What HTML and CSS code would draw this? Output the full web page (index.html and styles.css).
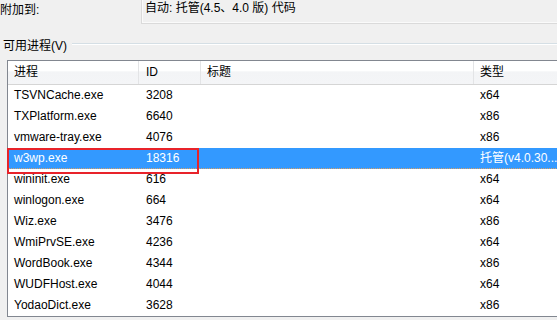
FILE: index.html
```html
<!DOCTYPE html>
<html lang="zh-CN">
<head>
    <meta charset="UTF-8">
    <title>附加到进程</title>
    <link rel="stylesheet" href="styles.css">
</head>
<body>
    <div class="dialog">
        <!-- 附加到 -->
        <div class="attach-row">
            <span class="attach-label">附加到:</span>
            <div class="attach-box">自动: 托管(4.5、4.0 版) 代码</div>
        </div>

        <!-- 可用进程 -->
        <div class="group-title">
            <span>可用进程(V)</span>
            <span class="group-line"></span>
        </div>

        <div class="list">
            <div class="row head">
                <div class="cell">进程</div>
                <div class="cell">ID</div>
                <div class="cell">标题</div>
                <div class="cell">类型</div>
            </div>
            <div class="row"><div class="cell">TSVNCache.exe</div><div class="cell">3208</div><div class="cell"></div><div class="cell">x64</div></div>
            <div class="row"><div class="cell">TXPlatform.exe</div><div class="cell">6640</div><div class="cell"></div><div class="cell">x86</div></div>
            <div class="row"><div class="cell">vmware-tray.exe</div><div class="cell">4076</div><div class="cell"></div><div class="cell">x86</div></div>
            <div class="row selected"><div class="cell">w3wp.exe</div><div class="cell">18316</div><div class="cell"></div><div class="cell">托管(v4.0.30...</div></div>
            <div class="row"><div class="cell">wininit.exe</div><div class="cell">616</div><div class="cell"></div><div class="cell">x64</div></div>
            <div class="row"><div class="cell">winlogon.exe</div><div class="cell">664</div><div class="cell"></div><div class="cell">x64</div></div>
            <div class="row"><div class="cell">Wiz.exe</div><div class="cell">3476</div><div class="cell"></div><div class="cell">x86</div></div>
            <div class="row"><div class="cell">WmiPrvSE.exe</div><div class="cell">4236</div><div class="cell"></div><div class="cell">x64</div></div>
            <div class="row"><div class="cell">WordBook.exe</div><div class="cell">4344</div><div class="cell"></div><div class="cell">x86</div></div>
            <div class="row"><div class="cell">WUDFHost.exe</div><div class="cell">4044</div><div class="cell"></div><div class="cell">x64</div></div>
            <div class="row"><div class="cell">YodaoDict.exe</div><div class="cell">3628</div><div class="cell"></div><div class="cell">x86</div></div>

            <!-- 标注框 -->
            <div class="mark"></div>
        </div>
    </div>
</body>
</html>
```

FILE: styles.css
```css
/* 基本 */
body {
    margin: 0;
    background: #f0f0f0;
    font-family: "Liberation Sans", "Noto Sans CJK SC", sans-serif;
    font-size: 12px;
    color: #000;
    overflow: hidden;
    width: 557px;
    height: 320px;
}

.dialog {
    width: 557px;
}

/* 附加到 */
.attach-row {
    display: flex;
    height: 24px;
}

.attach-label {
    width: 138px;
    padding-top: 2px;
    line-height: 16px;
}

.attach-box {
    flex: 1;
    margin-left: 3px;
    margin-top: -4px;
    padding: 4px 0 0 3px;
    line-height: 16px;
    border-left: 1px solid #dadada;
    border-bottom: 1px solid #dadada;
    box-shadow: inset 1px -1px 0 #fafafa;
}

/* 分组 */
.group-title {
    display: flex;
    align-items: center;
    height: 16px;
    margin-top: 12px;
    padding-left: 3px;
}

.group-line {
    flex: 1;
    margin-left: 5px;
    border-top: 1px solid #d5dfe5;
    border-bottom: 1px solid #fff;
}

/* 列表 */
.list {
    position: relative;
    margin-top: 8px;
    margin-left: 7px;
    width: 570px;
    background: #fff;
    border: 1px solid #828790;
    border-right: none;
}

.row {
    display: grid;
    grid-template-columns: 131px 62px 273px 1fr;
    height: 21px;
    line-height: 21px;
}

.cell {
    padding-left: 6px;
    white-space: nowrap;
    overflow: hidden;
}

.cell:nth-child(2) {
    padding-left: 7px;
}

.head {
    height: 23px;
    line-height: 23px;
    background: linear-gradient(#ffffff 0%, #ffffff 45%, #f3f4f6 46%, #f4f5f7 100%);
    border-bottom: 1px solid #d5d5d5;
}

.head .cell {
    border-right: 1px solid #e3e4e6;
}

.head .cell:last-child {
    border-right: none;
}

.selected {
    background: #3399ff;
    color: #fff;
    height: 20px;
    line-height: 20px;
    border-bottom: 1px dotted #d9a066;
}

/* 红色标注 */
.mark {
    position: absolute;
    left: -1px;
    top: 87px;
    width: 188px;
    height: 22px;
    border: 2px solid #e8232a;
    pointer-events: none;
}
```
